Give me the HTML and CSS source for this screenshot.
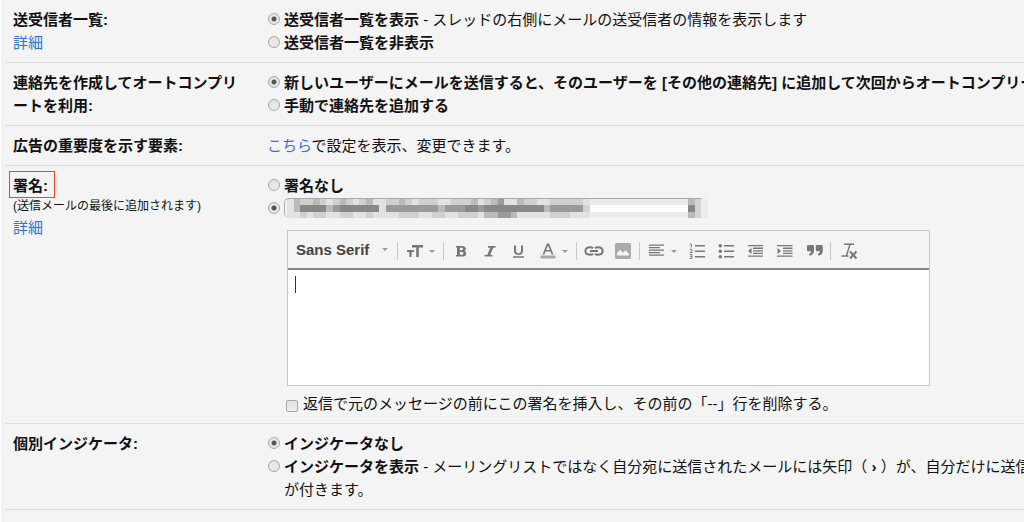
FILE: index.html
```
<!DOCTYPE html>
<html lang="ja">
<head>
    <meta charset="UTF-8">
    <title>設定</title>
    <link rel="stylesheet" href="styles.css">
</head>
<body>
    <main class="settings">
        <section class="row">
            <div class="label">
                <h2>送受信者一覧:</h2>
                <a href="#">詳細</a>
            </div>
            <div class="options">
                <label class="option"><input type="radio" name="people" checked><span><b>送受信者一覧を表示</b> - スレッドの右側にメールの送受信者の情報を表示します</span></label>
                <label class="option"><input type="radio" name="people"><b>送受信者一覧を非表示</b></label>
            </div>
        </section>

        <section class="row">
            <div class="label">
                <h2>連絡先を作成してオートコンプリートを利用:</h2>
            </div>
            <div class="options">
                <label class="option"><input type="radio" name="contacts" checked><b>新しいユーザーにメールを送信すると、そのユーザーを [その他の連絡先] に追加して次回からオートコンプリート</b></label>
                <label class="option"><input type="radio" name="contacts"><b>手動で連絡先を追加する</b></label>
            </div>
        </section>

        <section class="row">
            <div class="label">
                <h2>広告の重要度を示す要素:</h2>
            </div>
            <div class="options">
                <p><a href="#">こちら</a>で設定を表示、変更できます。</p>
            </div>
        </section>

        <section class="row">
            <div class="label">
                <h2 class="marked">署名:</h2>
                <p class="note">(送信メールの最後に追加されます)</p>
                <a href="#">詳細</a>
            </div>
            <div class="options">
                <label class="option"><input type="radio" name="signature"><b>署名なし</b></label>
                <div class="option">
                    <input type="radio" name="signature" aria-label="署名あり" checked>
                    <div class="account">
                        <select aria-label="アカウント"></select>
                        <svg class="mosaic" viewBox="0 0 64 3" preserveAspectRatio="none" shape-rendering="crispEdges" aria-hidden="true">
                            <path fill="#e2e2e2" d="M0 0h46v3H0z"/>
                            <path fill="#d0d0d0" d="M1 0h5v1h-5zM7 0h3v1H7zM11 0h2v1h-2zM15 0h4v1h-4zM20 0h3v1h-3zM25 0h3v1h-3zM30 0h1v1h-1zM36 0h2v1h-2zM40 0h5v1h-5zM2 2h1v1H2zM4 2h2v1H4zM8 2h2v1H8zM12 2h1v1h-1zM17 2h3v1h-3zM22 2h2v1h-2zM26 2h3v1h-3zM40 2h3v1h-3z"/>
                            <path fill="#bababa" d="M1 0h1v2H1zM4 0h1v1H4zM8 0h1v1H8zM12 0h1v1h-1zM17 0h1v1h-1zM28 0h1v1h-1zM31 0h2v1h-2zM35 0h1v1h-1zM39 1h1v1h-1zM30 2h5v1h-5zM61 0h1v3h-1zM6 1h1v1H6zM23 1h1v1h-1z"/>
                            <path fill="#9a9a9a" d="M7 1h1v1H7zM15 1h8v1h-8zM24 1h3v1h-3zM29 1h1v1h-1zM40 1h5v1h-5zM32 0h1v1h-1zM32 2h2v1h-2z"/>
                            <path fill="#888" d="M2 1h4v1H2zM8 1h6v1H8zM27 1h2v1h-2zM30 1h9v1h-9zM61 1h1v1h-1z"/>
                            <path fill="#ececec" d="M46 0h15v3H46zM63 0h1v3h-1z"/>
                            <path fill="#fff" d="M46 1h15v1H46z"/>
                            <path fill="#d3d3d3" d="M62 0h1v3h-1zM45 1h1v1h-1z"/>
                        </svg>
                    </div>
                </div>

                <div class="editor">
                    <div class="toolbar">
                        <button type="button" class="drop font">Sans Serif<i class="arrow"></i></button>
                        <span class="sep"></span>
                        <button type="button" class="drop" aria-label="サイズ">
                            <svg viewBox="0 0 18 18"><path d="M6 3h11v2.400h-4.200V15h-2.600V5.400H6zM1 8h7v2H5.600v5H3.400v-5H1z"/></svg><i class="arrow"></i>
                        </button>
                        <span class="sep"></span>
                        <button type="button" aria-label="太字">
                            <svg viewBox="0 0 18 18"><path fill-rule="evenodd" d="M4 4h6c2.400 0 3.800 1 3.800 2.800 0 1.100-.6 1.900-1.500 2.300 1.200.3 1.900 1.200 1.900 2.500 0 2-1.500 3-4 3H4v-1.500h1V5.500H4zM7.800 5.800v2.400h1.700c1 0 1.500-.4 1.500-1.200s-.5-1.200-1.500-1.200zm0 4.200v2.800h1.900c1.100 0 1.600-.5 1.600-1.400S10.800 10 9.700 10z"/></svg>
                        </button>
                        <button type="button" aria-label="斜体">
                            <svg viewBox="0 0 18 18"><path d="M7 4h7.500v1.700h-2.300l-3 7.200h2.300v1.700H3.500v-1.700h2.800l3-7.200H7z"/></svg>
                        </button>
                        <button type="button" aria-label="下線">
                            <svg viewBox="0 0 18 18"><path d="M4 3.500h2v5c0 1.900.9 2.800 2.500 2.800s2.500-.9 2.500-2.800v-5h2v5c0 3-1.700 4.500-4.500 4.500S4 11.500 4 8.500zM3 14.300h11v1.500H3z"/></svg>
                        </button>
                        <button type="button" class="drop" aria-label="テキストの色">
                            <svg viewBox="0 0 18 18"><path fill="#aaa" d="M1.500 13.500h15v3h-15z"/><path fill-rule="evenodd" d="M8 1.500h2L14.500 12.500h-1.900l-1.100-2.900h-5L5.400 12.500H3.500zM9 3.400L7.100 8.100h3.800z"/></svg><i class="arrow"></i>
                        </button>
                        <span class="sep"></span>
                        <button type="button" aria-label="リンク">
                            <svg viewBox="0 0 20 18" class="wide"><path fill="none" stroke="#777" stroke-width="2" d="M9 6.200C8.300 5.500 7.600 5.200 6 5.200 3 5.200 1.400 6.800 1.400 9S3 12.800 6 12.800c1.600 0 2.300-.3 3-1M11 6.200c.7-.7 1.400-1 3-1 3 0 4.600 1.600 4.600 3.800S17 12.800 14 12.800c-1.600 0-2.300-.3-3-1M6 9h8"/></svg>
                        </button>
                        <button type="button" aria-label="写真">
                            <svg viewBox="0 0 18 18"><rect x="1" y="1" width="16" height="16" rx="1.500" fill="#aaa"/><path fill="#f5f5f5" d="M3 13.500V11l3-3.200 3 3 2.500-2.500L15 12v1.500z"/></svg>
                        </button>
                        <span class="sep"></span>
                        <button type="button" class="drop" aria-label="配置">
                            <svg viewBox="0 0 18 18"><path d="M1 2.500h15v1.300H1zM1 5h11v1.300H1zM1 7.500h15v1.300H1zM1 10h11v1.300H1zM1 12.500h15v1.300H1z"/></svg><i class="arrow"></i>
                        </button>
                        <button type="button" aria-label="番号付きリスト">
                            <svg viewBox="0 0 18 18"><path d="M6 3h10v1.500H6zM6 8.500h10V10H6zM6 14h10v1.500H6z"/><path fill="none" stroke="#777" d="M.8 2h1.500v3.500M.8 7.200h2v1.600L1.100 10.500h2.200M.8 12.500h2v4h-2M1.300 14.500h1.500"/></svg>
                        </button>
                        <button type="button" aria-label="箇条書き">
                            <svg viewBox="0 0 18 18"><path d="M6 3h10v1.500H6zM6 8.500h10V10H6zM6 14h10v1.500H6z"/><circle cx="2.300" cy="3.700" r="1.700"/><circle cx="2.300" cy="9.200" r="1.700"/><circle cx="2.300" cy="14.700" r="1.700"/></svg>
                        </button>
                        <button type="button" aria-label="インデント減">
                            <svg viewBox="0 0 18 18"><path d="M1 3h15v1.300H1zM6 5.600h10v1.300H6zM6 8.200h10v1.300H6zM6 10.800h10v1.300H6zM1 13.400h15v1.300H1zM4.500 6v6L1 9z"/></svg>
                        </button>
                        <button type="button" aria-label="インデント増">
                            <svg viewBox="0 0 18 18"><path d="M1 3h15.500v1.300H1zM7 5.600h9.500v1.300H7zM7 8.200h9.500v1.300H7zM7 10.800h9.500v1.300H7zM1 13.400h15.500v1.300H1zM1.500 6v6L5 9z"/></svg>
                        </button>
                        <button type="button" aria-label="引用">
                            <svg viewBox="0 0 18 18"><path d="M3.500 3h4c1 0 1.500.5 1.500 1.500v4c0 3-1.300 4.500-4.300 5.200l-.8-1.900c1.400-.5 2.100-1.200 2.200-2.600H3.500C2.500 9.200 2 8.700 2 7.700V4.500C2 3.500 2.500 3 3.500 3zM12.300 3h4c1 0 1.500.5 1.500 1.500v4c0 3-1.300 4.500-4.300 5.200l-.8-1.900c1.400-.5 2.100-1.200 2.200-2.600h-2.600c-1 0-1.500-.5-1.500-1.500V4.500c0-1 .5-1.500 1.500-1.500z"/></svg>
                        </button>
                        <span class="sep"></span>
                        <button type="button" aria-label="書式をクリア">
                            <svg viewBox="0 0 18 18"><path fill="none" stroke="#777" stroke-width="1.400" d="M5 2.200h10M11 2.200L7.500 13.500M2.500 14h7"/><path fill="none" stroke="#777" stroke-width="2" d="M11 9.500l6.500 7M17.500 9.500l-6.500 7"/></svg>
                        </button>
                    </div>
                    <div class="body">
                        <textarea aria-label="署名"></textarea>
                        <span class="caret"></span>
                    </div>
                </div>

                <label class="check"><input type="checkbox">返信で元のメッセージの前にこの署名を挿入し、その前の「--」行を削除する。</label>
            </div>
        </section>

        <section class="row">
            <div class="label">
                <h2>個別インジケータ:</h2>
            </div>
            <div class="options">
                <label class="option"><input type="radio" name="indicator" checked><b>インジケータなし</b></label>
                <label class="option"><input type="radio" name="indicator"><span><b>インジケータを表示</b> - メーリングリストではなく自分宛に送信されたメールには矢印（ <b>›</b> ）が、自分だけに送信<br>が付きます。</span></label>
            </div>
        </section>
    </main>
</body>
</html>
```
FILE: styles.css
```
* {
    margin: 0;
    padding: 0;
    box-sizing: border-box;
}

body {
    font-family: "Liberation Sans", "Noto Sans CJK JP", sans-serif;
    font-size: 15px;
    line-height: 23px;
    color: #111;
    background: #f4f4f4;
}

a {
    color: #3072d9;
    text-decoration: none;
}

.settings {
    min-height: 100vh;
    padding-left: 4px;
    border-left: 1px solid #fff;
    overflow: hidden;
}

.row {
    display: grid;
    grid-template-columns: 254px minmax(0, 1fr);
    padding: 8px 0 8px 8px;
    border-bottom: 1px solid #dfdfdf;
}

.label {
    padding-right: 20px;
}

h2 {
    font-size: 15px;
    font-weight: bold;
}

.note {
    font-size: 12px;
    line-height: 19px;
}

/* red frame around the heading */
.marked {
    position: relative;
    width: fit-content;
}

.marked::after {
    content: "";
    position: absolute;
    inset: -3px -7px -1px -4px;
    border: 1px solid #f8401c;
}

.options {
    white-space: nowrap;
}

.option {
    display: flex;
    gap: 4px;
    padding-left: 1px;
}

input[type="radio"],
input[type="checkbox"] {
    appearance: none;
    flex: none;
    width: 12px;
    height: 12px;
    margin-top: 5px;
    border: 1px solid #a8a8a8;
    background: linear-gradient(#e2e2e2, #ececec);
}

input[type="radio"] {
    border-radius: 50%;
}

input[type="radio"]:checked {
    background: radial-gradient(circle, #555 2px, #e6e6e6 3px);
}

input[type="checkbox"] {
    border-radius: 2px;
    margin-top: 8px;
}

.account {
    position: relative;
    width: 424px;
    height: 20px;
    margin-top: 1px;
}

.account select {
    display: block;
    appearance: none;
    width: 418px;
    height: 20px;
    border: 1px solid #aaa;
    border-width: 1px 0 0 1px;
    border-radius: 5px 0 0 5px;
    background: #f4f4f4;
}

.mosaic {
    position: absolute;
    top: 1px;
    right: 0;
    width: 421px;
    height: 19px;
}

.editor {
    width: 643px;
    margin: 12px 0 6px 20px;
    border: 1px solid #c8c8c8;
}

.toolbar {
    display: flex;
    align-items: center;
    height: 39px;
    padding-top: 3px;
    border-bottom: 2px solid #858585;
}

.toolbar button {
    display: flex;
    align-items: center;
    justify-content: center;
    flex: none;
    width: 29px;
    height: 29px;
    border: none;
    background: none;
}

.toolbar .drop {
    justify-content: flex-start;
    gap: 5px;
    width: 41px;
    padding-left: 6px;
}

.toolbar .font {
    justify-content: space-between;
    width: 107px;
    height: 23px;
    padding: 0 7px 0 8px;
    margin-bottom: 4px;
    font: bold 15px/23px "Liberation Sans", sans-serif;
    color: #444;
}

.toolbar svg {
    width: 18px;
    height: 18px;
    fill: #777;
}

.toolbar .wide {
    width: 20px;
}

.arrow {
    border: 3px solid transparent;
    border-top-color: #999;
    border-bottom: none;
}

.sep {
    width: 1px;
    height: 18px;
    margin: 0 2px;
    background: #c8c8c8;
}

.body {
    position: relative;
}

textarea {
    display: block;
    width: 100%;
    height: 115px;
    padding: 4px 8px;
    border: none;
    resize: none;
    background: #fff;
}

.caret {
    position: absolute;
    top: 6px;
    left: 7px;
    width: 1px;
    height: 17px;
    background: #333;
}

.check {
    display: flex;
    gap: 5px;
    margin-left: 19px;
}
```
